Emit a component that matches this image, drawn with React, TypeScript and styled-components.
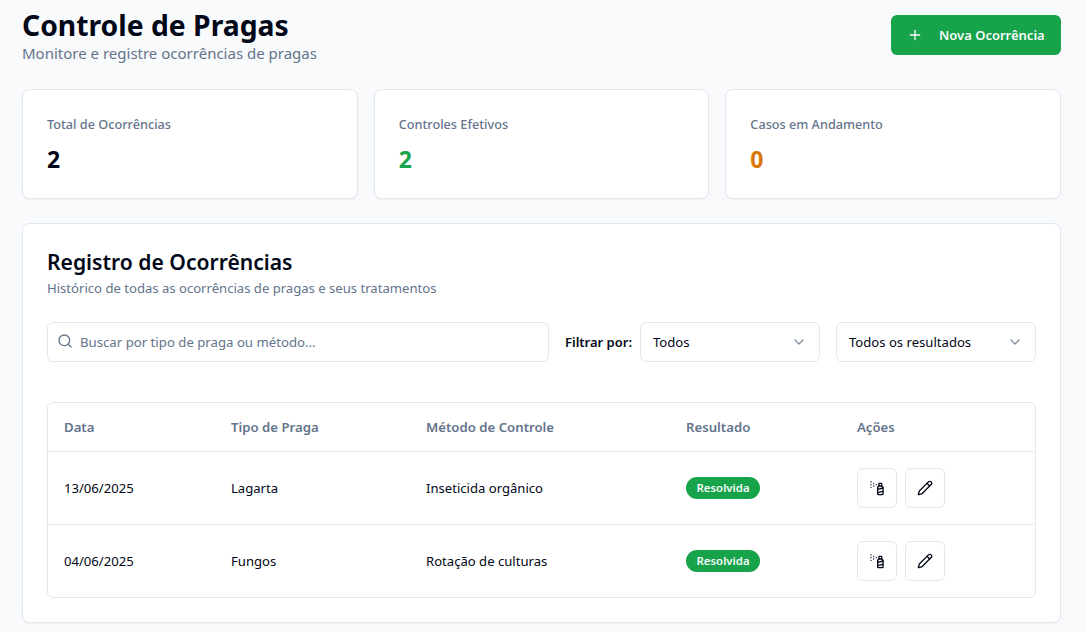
import { Pencil, Plus, Search, ChevronDown, SprayCan } from "lucide-react";
import styled, { createGlobalStyle } from "styled-components";

const GlobalStyle = createGlobalStyle`
  html, body {
    margin: 0;
    padding: 0;
    background: #f8fafc;
    font-family: "Noto Sans", "Open Sans", sans-serif;
    color: #020817;
  }
  * {
    box-sizing: border-box;
  }
`;

const Page = styled.div`
  padding: 7px 25px 9px 22px;
  display: flex;
  flex-direction: column;
  gap: 24px;
`;

const Header = styled.header`
  display: flex;
  justify-content: space-between;
  align-items: flex-start;
  height: 58px;
`;

const Title = styled.h1`
  margin: 0;
  font-size: 28.3px;
  line-height: 36px;
  font-weight: 700;
`;

const Subtitle = styled.p`
  margin: 0;
  font-size: 15px;
  line-height: 21px;
  color: #64748b;
`;

const NewButton = styled.button`
  display: flex;
  align-items: center;
  gap: 16px;
  width: 170px;
  height: 40px;
  margin-top: 8px;
  padding: 0 16px;
  border: 0;
  border-radius: 6px;
  background: #16a34a;
  color: #f8fafc;
  white-space: nowrap;
  font: 600 13px "Noto Sans", sans-serif;
`;

const Stats = styled.section`
  display: grid;
  grid-template-columns: repeat(3, 1fr);
  gap: 16px;
`;

const Card = styled.div`
  background: #fff;
  border: 1px solid #e2e8f0;
  border-radius: 8px;
  box-shadow: 0 1px 2px rgba(0, 0, 0, 0.05);
`;

const StatCard = styled(Card)`
  height: 110px;
  padding: 24px;
`;

const StatLabel = styled.div`
  font-size: 12.7px;
  line-height: 20px;
  font-weight: 500;
  color: #64748b;
`;

const StatValue = styled.div<{ $color: string }>`
  margin-top: 9px;
  font-size: 23px;
  line-height: 32px;
  font-weight: 700;
  color: ${(p) => p.$color};
`;

const Panel = styled(Card)`
  height: 400px;
  padding: 24px;
`;

const PanelTitle = styled.h2`
  margin: 0;
  font-size: 21.1px;
  line-height: 28px;
  font-weight: 600;
`;

const PanelSubtitle = styled.p`
  margin: 2px 0 0;
  font-size: 13.1px;
  line-height: 20px;
  color: #64748b;
`;

const Filters = styled.div`
  display: flex;
  align-items: center;
  gap: 16px;
  margin-top: 24px;
`;

const SearchBox = styled.label`
  flex: 1;
  height: 40px;
  display: flex;
  align-items: center;
  gap: 7px;
  padding: 0 9px;
  border: 1px solid #e2e8f0;
  border-radius: 6px;
  background: #fff;
  color: #64748b;
  svg {
    margin-top: -3px;
  }
`;

const SearchInput = styled.input`
  flex: 1;
  min-width: 0;
  border: 0;
  outline: 0;
  padding: 0;
  background: transparent;
  font: 13.2px "Noto Sans", sans-serif;
  &::placeholder {
    color: #64748b;
    opacity: 1;
  }
`;

const FilterGroup = styled.div`
  display: flex;
  align-items: center;
  gap: 8px;
`;

const FilterLabel = styled.span`
  font-size: 13px;
  font-weight: 600;
`;

const SelectBox = styled.button<{ $width: number }>`
  width: ${(p) => p.$width}px;
  height: 40px;
  display: flex;
  align-items: center;
  justify-content: space-between;
  padding: 0 12px;
  border: 1px solid #e2e8f0;
  border-radius: 6px;
  background: #fff;
  color: #020817;
  font: 13.1px "Noto Sans", sans-serif;
  svg {
    color: #64748b;
    opacity: 0.8;
  }
`;

const TableWrap = styled.div`
  margin-top: 40px;
  border: 1px solid #e2e8f0;
  border-radius: 6px;
  overflow: hidden;
`;

const Table = styled.table`
  width: 100%;
  border-collapse: collapse;
  table-layout: fixed;
  font-size: 13.1px;
`;

const HeadCell = styled.th<{ $width?: number }>`
  width: ${(p) => (p.$width ? `${p.$width}px` : "auto")};
  height: 48px;
  padding: 0 16px;
  text-align: left;
  font-size: 13.2px;
  font-weight: 600;
  color: #64748b;
  border-bottom: 1px solid #e2e8f0;
`;

const Row = styled.tr`
  & + & td {
    border-top: 1px solid #e2e8f0;
  }
`;

const Cell = styled.td`
  height: 73px;
  padding: 0 16px;
`;

const Badge = styled.span`
  display: inline-block;
  padding: 2px 10.5px;
  border-radius: 999px;
  background: #16a34a;
  color: #f8fafc;
  font-size: 11.4px;
  line-height: 18px;
  font-weight: 600;
  vertical-align: middle;
`;

const Actions = styled.div`
  display: flex;
  gap: 8px;
`;

const IconButton = styled.button`
  width: 40px;
  height: 40px;
  display: flex;
  align-items: center;
  justify-content: center;
  padding: 0;
  border: 1px solid #e2e8f0;
  border-radius: 6px;
  background: #fff;
  color: #020817;
`;

const rows = [
  { date: "13/06/2025", pest: "Lagarta", method: "Inseticida orgânico" },
  { date: "04/06/2025", pest: "Fungos", method: "Rotação de culturas" },
];

export default function App() {
  return (
    <>
      <GlobalStyle />
      <Page>
        <Header>
          <div>
            <Title>Controle de Pragas</Title>
            <Subtitle>Monitore e registre ocorrências de pragas</Subtitle>
          </div>
          <NewButton>
            <Plus size={16} />
            Nova Ocorrência
          </NewButton>
        </Header>

        <Stats>
          <StatCard>
            <StatLabel>Total de Ocorrências</StatLabel>
            <StatValue $color="#020817">2</StatValue>
          </StatCard>
          <StatCard>
            <StatLabel>Controles Efetivos</StatLabel>
            <StatValue $color="#16a34a">2</StatValue>
          </StatCard>
          <StatCard>
            <StatLabel>Casos em Andamento</StatLabel>
            <StatValue $color="#d97706">0</StatValue>
          </StatCard>
        </Stats>

        <Panel>
          <PanelTitle>Registro de Ocorrências</PanelTitle>
          <PanelSubtitle>
            Histórico de todas as ocorrências de pragas e seus tratamentos
          </PanelSubtitle>

          <Filters>
            <SearchBox>
              <Search size={16} />
              <SearchInput placeholder="Buscar por tipo de praga ou método..." />
            </SearchBox>
            <FilterGroup>
              <FilterLabel>Filtrar por:</FilterLabel>
              <SelectBox $width={180}>
                Todos
                <ChevronDown size={16} />
              </SelectBox>
            </FilterGroup>
            <SelectBox $width={200}>
              Todos os resultados
              <ChevronDown size={16} />
            </SelectBox>
          </Filters>

          <TableWrap>
            <Table>
              <thead>
                <tr>
                  <HeadCell $width={167}>Data</HeadCell>
                  <HeadCell $width={195}>Tipo de Praga</HeadCell>
                  <HeadCell $width={260}>Método de Controle</HeadCell>
                  <HeadCell $width={171}>Resultado</HeadCell>
                  <HeadCell>Ações</HeadCell>
                </tr>
              </thead>
              <tbody>
                {rows.map((row) => (
                  <Row key={row.date}>
                    <Cell>{row.date}</Cell>
                    <Cell>{row.pest}</Cell>
                    <Cell>{row.method}</Cell>
                    <Cell>
                      <Badge>Resolvida</Badge>
                    </Cell>
                    <Cell>
                      <Actions>
                        <IconButton>
                          <SprayCan size={16} />
                        </IconButton>
                        <IconButton>
                          <Pencil size={16} />
                        </IconButton>
                      </Actions>
                    </Cell>
                  </Row>
                ))}
              </tbody>
            </Table>
          </TableWrap>
        </Panel>
      </Page>
    </>
  );
}
